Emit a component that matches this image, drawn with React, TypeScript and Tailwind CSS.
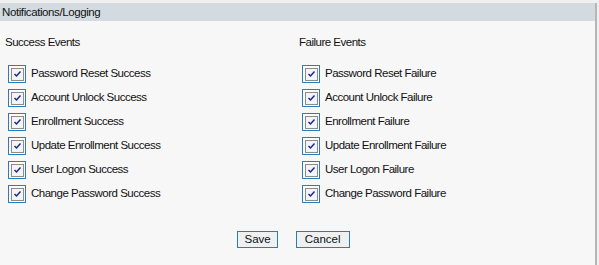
const success = [
  "Password Reset Success",
  "Account Unlock Success",
  "Enrollment Success",
  "Update Enrollment Success",
  "User Logon Success",
  "Change Password Success",
]

const failure = [
  "Password Reset Failure",
  "Account Unlock Failure",
  "Enrollment Failure",
  "Update Enrollment Failure",
  "User Logon Failure",
  "Change Password Failure",
]

function Check({ label }: { label: string }) {
  return (
    <label className="flex items-center h-[24px]">
      <span className="w-[18px] h-[18px] border border-[#2a7db5] flex items-center justify-center bg-white">
        <span className="w-[13px] h-[13px] border border-[#8c8c8c] bg-[#f4f4f4] flex items-center justify-center">
          <svg width="9" height="8" viewBox="0 0 9 8">
            <path d="M1.5 4 L3.5 6 L7.5 1.5" stroke="#1d2a8a" strokeWidth="1.5" fill="none" />
          </svg>
        </span>
      </span>
      <span className="ml-[5px]">{label}</span>
    </label>
  )
}

function Column({ title, items }: { title: string; items: string[] }) {
  return (
    <div className="flex flex-col">
      <div className="h-[17px] leading-[17px]">{title}</div>
      <div className="mt-[11px] pl-[3px] flex flex-col">
        {items.map((i) => (
          <Check key={i} label={i} />
        ))}
      </div>
    </div>
  )
}

export default function App() {
  return (
    <div className="w-[599px] h-[265px] bg-[#f0f0f0] pt-[3px] text-[11.5px] tracking-[-0.5px] text-[#111] font-['Liberation_Sans',Arial,sans-serif] overflow-hidden">
      <div className="w-[597px] h-[262px] bg-[#f7f7f7] border-r-2 border-[#b5b5b5] flex flex-col">
        <div className="h-[18px] leading-[18px] bg-[#d3dbe1] pl-[2px] tracking-[-0.4px]">Notifications/Logging</div>
        <div className="flex pt-[13px]">
          <div className="w-[295px] pl-[5px]">
            <Column title="Success Events" items={success} />
          </div>
          <div className="pl-[4px]">
            <Column title="Failure Events" items={failure} />
          </div>
        </div>
        <div className="flex justify-center gap-[18px] mt-[25px] pr-[8px]">
          <button className="h-[17px] px-[6px] border border-[#2a7db5] bg-[#f0f0f0] leading-[15px] tracking-normal">Save</button>
          <button className="h-[17px] px-[8px] border border-[#2a7db5] bg-[#f0f0f0] leading-[15px] tracking-normal">Cancel</button>
        </div>
      </div>
    </div>
  )
}
